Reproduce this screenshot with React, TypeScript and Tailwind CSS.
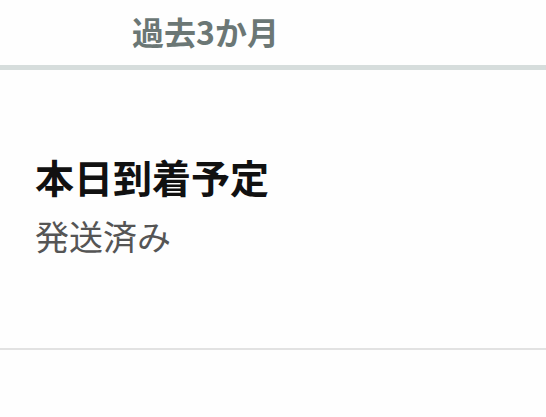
export default function App() {
  return (
    <div className="w-[546px] h-[417px] bg-[#fefefe] overflow-hidden" style={{ fontFamily: '"Noto Sans CJK JP", "Noto Sans", sans-serif' }}>
      <div className="h-[65px] flex items-center pl-[132px] pb-[3px]">
        <span className="text-[32px] font-bold text-[#6b7775] leading-none">過去3か月</span>
      </div>
      <div className="h-[5px] bg-[#d6dddc]" />
      <div className="h-[278px] flex flex-col pl-[35px] pt-[82px]">
        <div className="text-[39px] font-bold text-[#111111] leading-[48px]">本日到着予定</div>
        <div className="text-[34px] text-[#555555] leading-[44px] mt-[14px]">発送済み</div>
      </div>
      <div className="h-[2px] bg-[#e2e2e2]" />
    </div>
  );
}
